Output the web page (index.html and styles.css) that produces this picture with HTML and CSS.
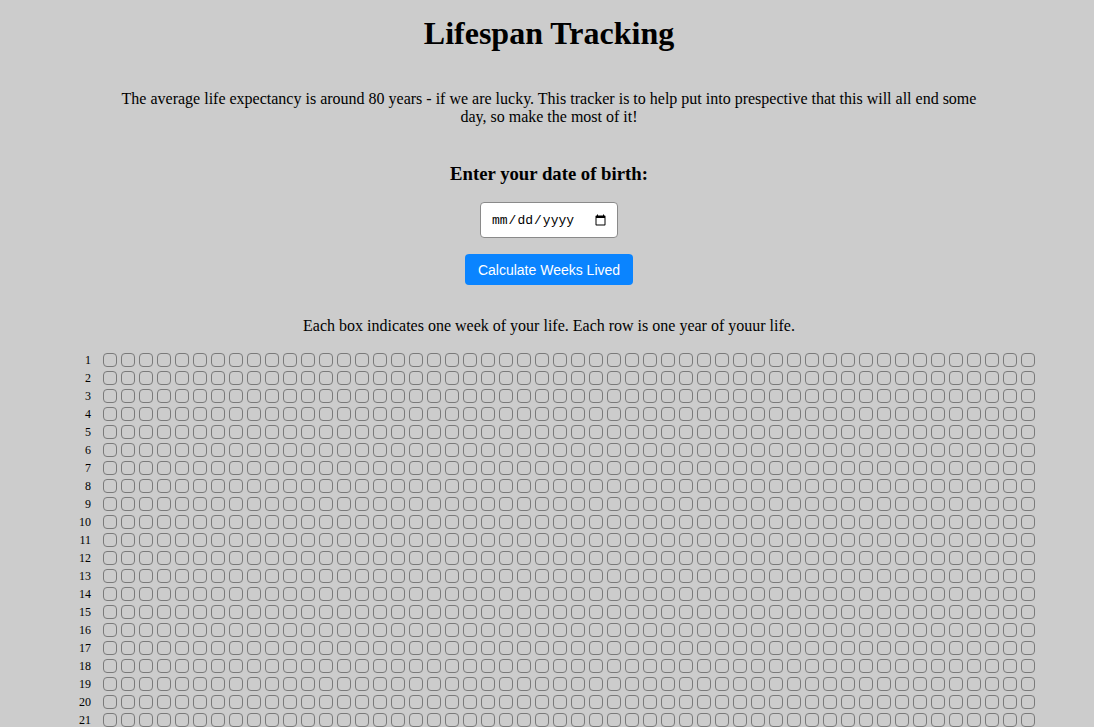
FILE: index.html
```html
<!DOCTYPE html>
<html lang="en">
<head>
<meta charset="utf-8">
<title>Lifespan Tracking</title>
<link rel="stylesheet" href="styles.css">
</head>
<body>
<main class="page">
  <h1 class="title">Lifespan Tracking</h1>
  <p class="intro">The average life expectancy is around 80 years - if we are lucky. This tracker is to help put into prespective that this will all end some day, so make the most of it!</p>
  <h3 class="dob-label">Enter your date of birth:</h3>
  <input class="dob-input" type="date">
  <button class="calc-btn" type="button">Calculate Weeks Lived</button>
  <p class="legend">Each box indicates one week of your life. Each row is one year of youur life.</p>
  <div class="grid" id="grid"></div>
</main>
<script src="script.js"></script>
</body>
</html>
```
FILE: styles.css
```css
html, body {
  margin: 0;
  padding: 0;
  background: #cccccc;
}
body {
  font-family: "Liberation Serif", "Times New Roman", serif;
  color: #000;
  overflow-x: hidden;
  scrollbar-width: none;
}
body::-webkit-scrollbar { display: none; }
.page {
  display: flex;
  flex-direction: column;
  align-items: center;
  padding-left: 4px;
}
.title {
  font-size: 32px;
  line-height: 37px;
  font-weight: bold;
  margin: 15px 0 0;
}
.intro {
  width: 80%;
  margin: 38px 0 0;
  font-size: 16px;
  line-height: 18px;
  text-align: center;
}
.dob-label {
  font-size: 18.72px;
  line-height: 22px;
  font-weight: bold;
  margin: 37px 0 0;
}
.dob-input {
  box-sizing: border-box;
  margin-top: 17px;
  width: 138px;
  height: 36px;
  padding: 0 8px 0 10px;
  border: 1px solid #8a8a8a;
  border-radius: 4px;
  background: #fff;
  font-family: "Liberation Mono", "Courier New", monospace;
  font-size: 13px;
  color: #000;
}
.calc-btn {
  box-sizing: border-box;
  margin-top: 16px;
  height: 31px;
  padding: 0 13px;
  border: none;
  border-radius: 4px;
  background: #0a84ff;
  color: #fff;
  font-family: "Liberation Sans", Arial, sans-serif;
  font-size: 14px;
}
.legend {
  margin: 32px 0 0;
  font-size: 16px;
  line-height: 18px;
}
.grid {
  margin-top: 16px;
  margin-left: -4px;
  display: flex;
  flex-direction: column;
}
.row {
  display: flex;
  height: 18px;
}
.row-label {
  box-sizing: border-box;
  width: 44px;
  padding-right: 10px;
  text-align: right;
  font-size: 12px;
  line-height: 18px;
}
.box {
  box-sizing: border-box;
  width: 14px;
  height: 14px;
  margin: 2px;
  border: 1px solid #7a7a7a;
  border-radius: 4px;
}
```
FILE: script.js
```js
(function () {
  var grid = document.getElementById('grid');
  var frag = document.createDocumentFragment();
  for (var y = 1; y <= 80; y++) {
    var row = document.createElement('div');
    row.className = 'row';
    var label = document.createElement('span');
    label.className = 'row-label';
    label.textContent = y;
    row.appendChild(label);
    for (var w = 0; w < 52; w++) {
      var b = document.createElement('div');
      b.className = 'box';
      row.appendChild(b);
    }
    frag.appendChild(row);
  }
  grid.appendChild(frag);
})();
```
